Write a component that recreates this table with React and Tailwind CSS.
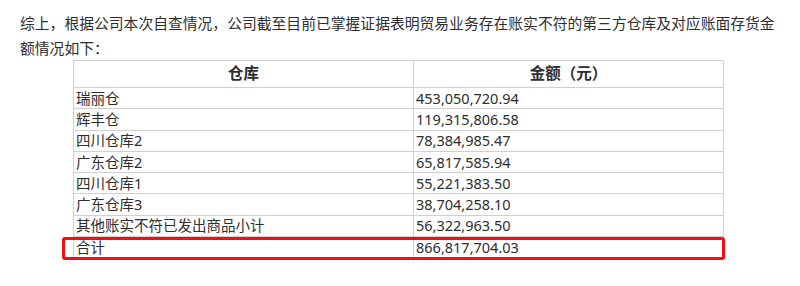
const rows = [
  ["瑞丽仓", "453,050,720.94"],
  ["辉丰仓", "119,315,806.58"],
  ["四川仓库2", "78,384,985.47"],
  ["广东仓库2", "65,817,585.94"],
  ["四川仓库1", "55,221,383.50"],
  ["广东仓库3", "38,704,258.10"],
  ["其他账实不符已发出商品小计", "56,322,963.50"],
  ["合计", "866,817,704.03"],
];

export default function App() {
  return (
    <div
      className="w-[800px] h-[286px] bg-white text-[#2e2e2e] px-[20px] pt-[11px]"
      style={{ fontFamily: '"Noto Sans", "Noto Sans CJK SC", sans-serif' }}
    >
      <p
        className="text-[14.8px] leading-[24.5px] whitespace-nowrap"
        style={{ fontFamily: '"Noto Sans CJK SC", sans-serif' }}
      >
        综上，根据公司本次自查情况，公司截至目前已掌握证据表明贸易业务存在账实不符的第三方仓库及对应账面存货金
        <br />
        额情况如下：
      </p>
      <div className="relative ml-[53px] w-[651px]">
        <table className="w-full border-collapse text-[14.5px] leading-none">
          <thead>
            <tr className="h-[27px]">
              <th className="w-[340px] border border-[#d0d0d0] font-bold text-[15.5px] text-center">仓库</th>
              <th className="border border-[#d0d0d0] font-bold text-[15.5px] text-center">金额（元）</th>
            </tr>
          </thead>
          <tbody>
            {rows.map(([name, amount]) => (
              <tr key={name} className="h-[21.25px]">
                <td className="border border-[#d0d0d0] pl-[2px] py-0">{name}</td>
                <td className="border border-[#d0d0d0] pl-[2px] py-0">{amount}</td>
              </tr>
            ))}
          </tbody>
        </table>
        <div className="absolute left-[-11px] top-[177px] w-[663px] h-[23px] border-[3px] border-[#ee1111] rounded-[3px]" />
      </div>
    </div>
  );
}
